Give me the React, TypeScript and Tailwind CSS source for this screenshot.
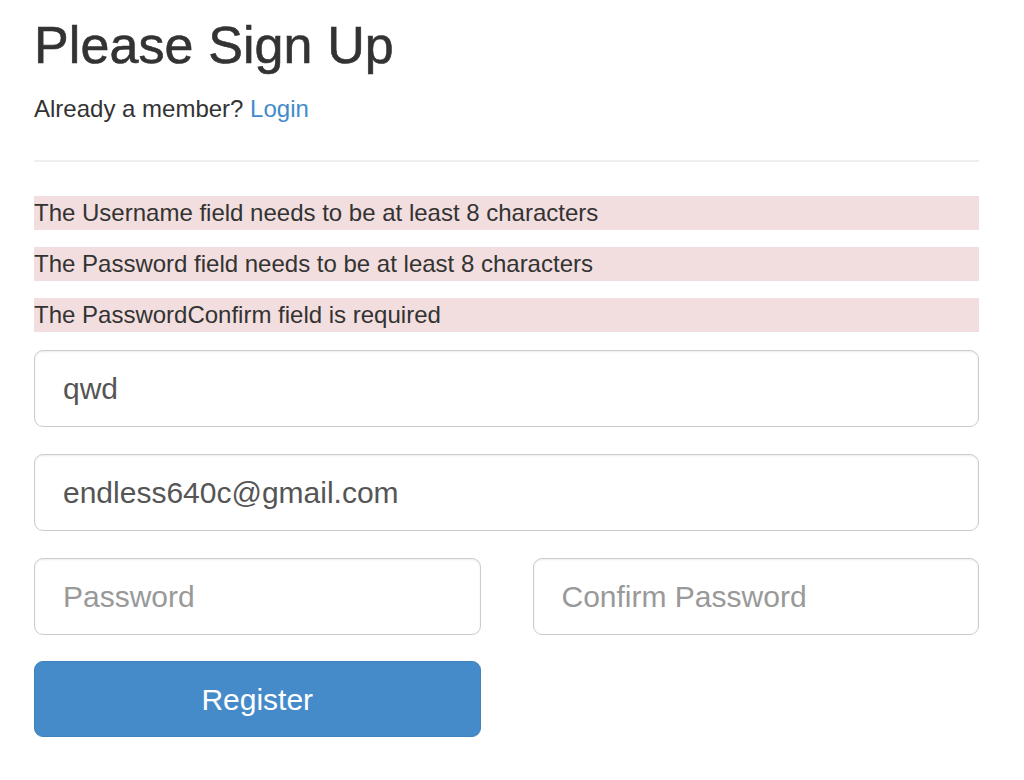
export default function App() {
  const errors = [
    'The Username field needs to be at least 8 characters',
    'The Password field needs to be at least 8 characters',
    'The PasswordConfirm field is required',
  ];

  const inputClass =
    'block w-full h-[77px] rounded-[9px] border border-[#ccc] bg-white px-[28px] text-[30px] text-[#555] placeholder:text-[#999] shadow-[inset_0_1px_2px_rgba(0,0,0,0.075)] outline-none';

  return (
    <div className="min-h-screen bg-white font-['Liberation_Sans',Arial,sans-serif] text-[#333]">
      <div className="ml-[34px] w-[945px] pt-[17px]">
        <h1 className="text-[52px] leading-[56px] font-normal tracking-[0.1px] [-webkit-text-stroke:0.6px_#333]">
          Please Sign Up
        </h1>
        <p className="mt-[19px] text-[24px] leading-[34px]">
          Already a member? <a href="#" className="text-[#428bca]">Login</a>
        </p>

        <hr className="mt-[34px] border-t-2 border-[#eee]" />

        {/* Validation errors */}
        <div className="mt-[34px] flex flex-col gap-[17px]">
          {errors.map((msg) => (
            <div key={msg} className="bg-[#f2dede] text-[24px] leading-[34px]">
              {msg}
            </div>
          ))}
        </div>

        <form className="mt-[18px] flex flex-col gap-[27px]" onSubmit={(e) => e.preventDefault()}>
          <input type="text" defaultValue="qwd" className={inputClass} />
          <input type="email" defaultValue="endless640c@gmail.com" className={inputClass} />
          <div className="grid grid-cols-2 gap-[52px]">
            <input type="password" placeholder="Password" className={inputClass} />
            <input type="password" placeholder="Confirm Password" className={inputClass} />
          </div>
          <div className="grid grid-cols-2 gap-[52px] -mt-[1px]">
            <button
              type="submit"
              className="h-[76px] rounded-[9px] border border-[#3f81bd] bg-[#458bc9] text-[30px] text-white"
            >
              Register
            </button>
          </div>
        </form>
      </div>
    </div>
  );
}
